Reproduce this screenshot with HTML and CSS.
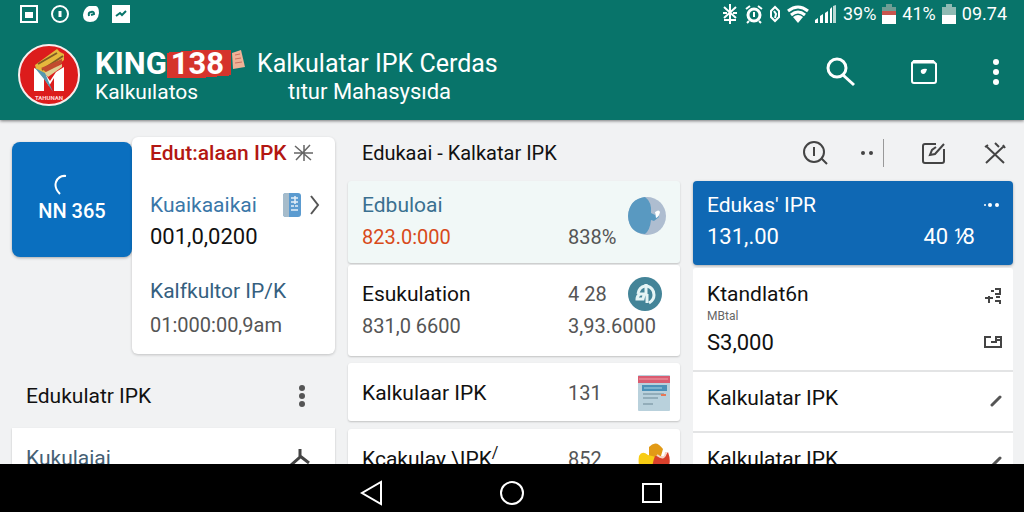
FILE: index.html
```html
<!DOCTYPE html>
<html lang="id">
<head>
    <meta charset="UTF-8">
    <meta name="viewport" content="width=device-width, initial-scale=1.0">
    <title>KING138 Kalkulator IPK</title>
    <link rel="stylesheet" href="styles.css">
</head>
<body>

<header class="header">
    <div class="status-bar">
        <div class="status-left">
            <svg width="18" height="18" viewBox="0 0 18 18"><rect x="1" y="1" width="16" height="16" fill="none" stroke="#fff" stroke-width="2"/><rect x="5" y="7" width="8" height="6" fill="#fff"/></svg>
            <svg width="20" height="20" viewBox="0 0 20 20"><circle cx="10" cy="10" r="8" fill="none" stroke="#fff" stroke-width="2"/><path d="M10 7v6" stroke="#fff" stroke-width="3"/></svg>
            <svg width="18" height="18" viewBox="0 0 18 18"><path d="M7 1h7q3 1 3 7-1 9-9 9-7 0-7-7 1-7 6-9z" fill="#fff"/><path d="M7 11q-1-4 2-4 3-1 3 2l-3 1" fill="none" stroke="#08746a" stroke-width="2"/></svg>
            <svg width="18" height="18" viewBox="0 0 18 18"><rect width="18" height="18" fill="#fff"/><path d="M4 11l4-3 2 2 4-4" fill="none" stroke="#08746a" stroke-width="2"/></svg>
        </div>
        <div class="status-right">
            <svg width="18" height="22" viewBox="0 0 18 22"><path d="M9 1v20M3 4l12 11M15 4L3 15M2 10h4M12 10h4M3 17h12" fill="none" stroke="#fff" stroke-width="2"/></svg>
            <svg width="18" height="20" viewBox="0 0 18 20"><circle cx="9" cy="11" r="6" fill="none" stroke="#fff" stroke-width="3"/><path d="M1 5l4-3M17 5l-4-3M9 8v5M4 17l-2 2M14 17l2 2" fill="none" stroke="#fff" stroke-width="2"/></svg>
            <svg width="12" height="18" viewBox="0 0 12 18"><path d="M6 2L2 6v6l4 4 4-4V6z" fill="none" stroke="#fff" stroke-width="2"/><path d="M5 6l2 3-1 4" stroke="#fff" stroke-width="2" fill="none"/></svg>
            <svg width="22" height="18" viewBox="0 0 22 18"><path d="M1 6q10-8 20 0M4 10q7-6 14 0" fill="none" stroke="#fff" stroke-width="3"/><path d="M6 12q5-4 10 0l-5 6z" fill="#fff"/></svg>
            <svg width="22" height="18" viewBox="0 0 22 18"><path d="M0 18v-3l3-2v5zM5 18v-7l3-2v9zM10 18V8l3-2v12zM15 18V4l2-2v16z" fill="#fff"/><path d="M18 18V1l3-1v18z" fill="#b9d9d4"/></svg>
            <span>39%</span>
            <svg width="14" height="20" viewBox="0 0 14 20"><path d="M4 0h6v3h4v7H0V3h4z" fill="#6f9d94"/><rect y="7" width="14" height="4" fill="#c8554d"/><rect y="11" width="14" height="9" fill="#fff"/></svg>
            <span>41%</span>
            <svg width="14" height="20" viewBox="0 0 14 20"><path d="M4 0h6v3h4v8H0V3h4z" fill="#8fbab3"/><rect y="11" width="14" height="9" fill="#fff"/></svg>
            <span>09.74</span>
        </div>
    </div>

    <div class="app-bar">
        <svg class="logo" width="62" height="62" viewBox="0 0 62 62">
            <circle cx="31" cy="31" r="30" fill="#dc1c1c" stroke="#f7eeee" stroke-width="2"/>
            <path d="M16 24l10 4 6 9 6-9 8-5v24H36V34l-5 8-5-8v13H16z" fill="#fff"/>
            <path d="M17 21l22-16 3 3 4 2v6L28 31l-10-6z" fill="#e5b83c"/>
            <path d="M20 20l19-11M24 26l21-14" stroke="#805b25" stroke-width="2"/>
            <path d="M23 24l21-9v4L29 29z" fill="#c14b2d"/>
            <path d="M26 29l18-9v3L30 33z" fill="#dfcf91"/>
            <path d="M17 24l10 5 8 19-9-13z" fill="#5798ae"/>
            <text x="31" y="56" text-anchor="middle" class="logo-text">TAHUNAN</text>
        </svg>
        <div class="brand">
            <div class="brand-name">KING<span class="brand-number">138</span><svg width="15" height="20" viewBox="0 0 15 20"><path d="M1 3l9-3 4 17-12 2z" fill="#f0b297"/><path d="M4 5l5-1M4 9l6-1M4 13l7-1" stroke="#cc705f"/></svg></div>
            <div>Kalkuılatos</div>
        </div>
        <h1 class="app-title">Kalkulatar IPK Cerdas <span>tıtur Mahasysıda</span></h1>
        <div class="app-actions">
            <button type="button" aria-label="Cari"><svg width="30" height="30" viewBox="0 0 30 30"><circle cx="11" cy="11" r="9" fill="none" stroke="#fff" stroke-width="3"/><path d="M17 18l11 10" stroke="#fff" stroke-width="3"/></svg></button>
            <button type="button" aria-label="Arsip"><svg width="28" height="26" viewBox="0 0 28 26"><path d="M4 2h19l3 3v17q0 2-2 2H4q-2 0-2-2V4z" fill="none" stroke="#fff" stroke-width="2"/><path d="M3 3h21" stroke="#fff" stroke-width="3"/><path d="M11 11q3-2 6-1-1 5-4 5-3-1-2-4z" fill="#fff"/></svg></button>
            <button type="button" aria-label="Menu"><svg width="8" height="28" viewBox="0 0 8 28" fill="#fff"><circle cx="4" cy="4" r="3"/><circle cx="4" cy="14" r="3"/><circle cx="4" cy="24" r="3"/></svg></button>
        </div>
    </div>
</header>

<main class="content">
    <section class="side">
        <div class="profile">
            <a href="#" class="tile">
                <svg width="14" height="21" viewBox="0 0 14 21"><path d="M13 2Q6 1 3 8q-2 6 4 12" fill="none" stroke="#fff" stroke-width="2"/></svg>
                <span>NN 365</span>
            </a>
            <div class="profile-card">
                <h2 class="profile-title">Edut:alaan IPK <svg width="19" height="18" viewBox="0 0 19 18"><path d="M1 2l16 14M16 1L2 16M10 1v16M0 9h19" stroke="#666" stroke-width="1.5"/></svg></h2>
                <a href="#" class="profile-link">
                    <span>Kuaikaaikai</span>
                    <svg class="book" width="18" height="24" viewBox="0 0 18 24"><rect width="18" height="24" rx="3" fill="#5b9bd0"/><path d="M3 0h3v24H3q-3 0-3-3V3q0-3 3-3z" fill="#a6bccb"/><path d="M8 5h7M8 9h7M8 13h3m1 0h3M8 17h7M12 3v8" stroke="#e5f0f8" stroke-width="1.5"/></svg>
                    <svg width="12" height="20" viewBox="0 0 12 20"><path d="M2 1l7 9-7 9" fill="none" stroke="#555" stroke-width="2"/></svg>
                </a>
                <div class="profile-value">001,0,0200</div>
                <div class="profile-label">Kalfkultor IP/K</div>
                <div class="profile-time">01:000:00,9am</div>
            </div>
        </div>
        <div class="side-header">
            <h2>Edukulatr IPK</h2>
            <button type="button" aria-label="Opsi"><svg width="8" height="22" viewBox="0 0 8 22" fill="#555"><circle cx="4" cy="3" r="3"/><circle cx="4" cy="11" r="3"/><circle cx="4" cy="19" r="3"/></svg></button>
        </div>
        <div class="side-card">
            <span>Kukulaiai</span>
            <svg width="22" height="24" viewBox="0 0 22 24"><path d="M11 1v8L1 18M11 8l9 7" fill="none" stroke="#444" stroke-width="3"/></svg>
        </div>
    </section>

    <section class="main-area">
        <div class="toolbar">
            <h2>Edukaai - Kalkatar IPK</h2>
            <button type="button" aria-label="Info"><svg width="26" height="24" viewBox="0 0 26 24"><circle cx="12" cy="11" r="10" fill="none" stroke="#444" stroke-width="2"/><path d="M12 6v9M19 17l6 6" stroke="#444" stroke-width="2"/></svg></button>
            <button type="button" class="more" aria-label="Lainnya"><svg width="12" height="6" viewBox="0 0 12 6" fill="#444"><circle cx="2" cy="3" r="2"/><circle cx="10" cy="3" r="2"/></svg></button>
            <button type="button" class="edit" aria-label="Ubah"><svg width="24" height="22" viewBox="0 0 24 22"><path d="M14 2H3Q1 2 1 4v15q0 2 2 2h17q2 0 2-2V7" fill="none" stroke="#444" stroke-width="2"/><path d="M22 2l-9 10-5 1 2-5 4-3" fill="none" stroke="#444" stroke-width="2"/></svg></button>
            <button type="button" aria-label="Tutup"><svg width="22" height="22" viewBox="0 0 22 22"><path d="M2 4l18 17M20 4L2 21M11 1l4 4M19 3l2 3M1 5l3-2" fill="none" stroke="#444" stroke-width="2"/></svg></button>
        </div>
        <div class="columns">
            <div class="list">
                <div class="row row-active">
                    <span class="blue">Edbuloai</span>
                    <svg class="tall" width="39" height="38" viewBox="0 0 39 38"><circle cx="19" cy="19" r="19" fill="#aebdd0"/><path d="M17 0q7 5 6 16l4 2 1-4 3 6-5 4-3-1q-1 10-6 14Q1 36 0 19 1 2 17 0z" fill="#5999c1"/><path d="M27 15q4-3 5 0-1 5-4 6z" fill="#fff"/></svg>
                    <span class="orange">823.0:000</span>
                    <span class="grey percent">838%</span>
                </div>
                <div class="row row-double">
                    <span>Esukulation</span>
                    <span class="grey">4 28</span>
                    <svg width="34" height="34" viewBox="0 0 34 34"><circle cx="17" cy="17" r="17" fill="#438498"/><path d="M10 17q1-7 7-8h2q7 2 7 9 0 5-5 8" fill="none" stroke="#e5f4f5" stroke-width="3"/><path d="M18 7v10h-6q-3 2-3 5h6l1-4M19 17v9" fill="none" stroke="#e5f4f5" stroke-width="3"/></svg>
                    <span class="grey">831,0 6600</span>
                    <span class="grey wide">3,93.6000</span>
                </div>
                <div class="row">
                    <span>Kalkulaar IPK</span>
                    <span class="grey">131</span>
                    <svg class="end" width="32" height="36" viewBox="0 0 32 36"><rect width="32" height="36" rx="1" fill="#b9d1dc"/><path d="M0 1h32v7H0z" fill="#d95c70"/><path d="M1 4h29" stroke="#f0a0aa"/><path d="M4 10h25v6H4z" fill="#4b91b8"/><path d="M6 13h18" stroke="#a9d3e4"/><path d="M5 19h21M5 23h15M5 29h10" stroke="#6d8997"/><path d="M23 20h5" stroke="#e77755" stroke-width="2"/></svg>
                </div>
                <div class="row">
                    <span>Kcakulay \IPK<sup>/</sup></span>
                    <span class="grey">852</span>
                    <svg class="end" width="32" height="34" viewBox="0 0 32 34"><path d="M11 5q7-8 14 2l-4 14-10 3z" fill="#e29a16"/><path d="M1 14q3-6 9-1l8 2-3 17H7Q-1 27 1 14z" fill="#f8cc13"/><path d="M17 14l9 1 4-5q4 11-1 17-7 7-14 5-2-8 2-18z" fill="#d9402b"/><path d="M19 13q8 6 9-3" fill="none" stroke="#f4d3c4" stroke-width="2"/></svg>
                </div>
            </div>

            <div class="list">
                <div class="summary">
                    <span>Edukas' IPR</span>
                    <svg width="15" height="6" viewBox="0 0 15 6" fill="#fff"><circle cx="1" cy="3" r="1"/><circle cx="6" cy="3" r="2"/><circle cx="13" cy="3" r="2"/></svg>
                    <span>131,.00</span>
                    <span class="summary-rate">40 ⅟8</span>
                </div>
                <div class="detail">
                    <div>
                        <div>Ktandlat6n</div>
                        <div class="detail-sub">MBtal</div>
                        <div class="detail-value">S3,000</div>
                    </div>
                    <div class="detail-icons">
                        <svg width="18" height="18" viewBox="0 0 18 18"><path d="M1 11h8M5 9v7M7 4h3M11 2h5v5h-5M12 10h4M11 14h5v3" fill="none" stroke="#444" stroke-width="2"/></svg>
                        <svg width="18" height="12" viewBox="0 0 18 12"><path d="M7 1H1v10h16V1h-5v5H7M12 4h4" fill="none" stroke="#444" stroke-width="2"/></svg>
                    </div>
                </div>
                <div class="item">
                    <span>Kalkulatar IPK</span>
                    <svg width="12" height="12" viewBox="0 0 12 12"><path d="M2 10l8-8" stroke="#555" stroke-width="3" stroke-linecap="round"/></svg>
                </div>
                <div class="item">
                    <span>Kalkulatar IPK</span>
                    <svg width="12" height="12" viewBox="0 0 12 12"><path d="M2 10l8-8" stroke="#555" stroke-width="3" stroke-linecap="round"/></svg>
                </div>
            </div>
        </div>
    </section>
</main>

<nav class="nav-bar">
    <button type="button" aria-label="Kembali"><svg width="24" height="26" viewBox="0 0 24 26"><path d="M21 2v22L2 13z" fill="none" stroke="#fff" stroke-width="2"/></svg></button>
    <button type="button" aria-label="Beranda"><svg width="26" height="26" viewBox="0 0 26 26"><circle cx="13" cy="13" r="11" fill="none" stroke="#fff" stroke-width="2"/></svg></button>
    <button type="button" aria-label="Terbaru"><svg width="24" height="24" viewBox="0 0 24 24"><rect x="3" y="3" width="18" height="18" fill="none" stroke="#fff" stroke-width="2"/></svg></button>
</nav>

</body>
</html>
```
FILE: styles.css
```css
* {
    box-sizing: border-box;
}
body {
    margin: 0;
    height: 100vh;
    display: flex;
    flex-direction: column;
    background-color: #f1f2f3;
    font-family: Roboto, "Liberation Sans", sans-serif;
    font-size: 21px;
    line-height: 32px;
    color: #111;
    white-space: nowrap;
}
h1, h2 {
    margin: 0;
    font-size: 21px;
    font-weight: normal;
}
a {
    color: inherit;
    text-decoration: none;
}
svg {
    display: block;
    flex-shrink: 0;
}
button {
    padding: 0;
    border: none;
    background: none;
    cursor: pointer;
}

/* header */
.header {
    flex-shrink: 0;
    position: relative;
    background-color: #08746a;
    color: #fff;
    box-shadow: 0 1px 3px rgba(0, 0, 0, 0.5);
}
.status-bar {
    display: flex;
    justify-content: space-between;
    height: 30px;
    padding: 0 17px 2px 20px;
    font-size: 18px;
}
.status-left, .status-right {
    display: flex;
    align-items: center;
}
.status-left {
    gap: 12px;
}
.status-right {
    gap: 6px;
}
.app-bar {
    display: flex;
    align-items: center;
    height: 90px;
    padding: 0 24px 0 18px;
}
.logo {
    margin-right: 15px;
}
.logo-text {
    font-size: 6px;
    font-weight: bold;
    fill: #ffd9d9;
}
.brand {
    padding-top: 6px;
    width: 162px;
    line-height: 28px;
}
.brand-name {
    display: flex;
    font-size: 31px;
    font-weight: bold;
}
.brand-number {
    padding: 0 7px 0 4px;
    background: linear-gradient(175deg, transparent 8%, #d5342c 8%, #d5342c 92%, transparent 92%);
}
.app-title {
    padding-top: 6px;
    font-size: 25px;
    line-height: 28px;
}
.app-title span {
    display: block;
    padding-left: 31px;
    font-size: 22px;
}
.app-actions {
    display: flex;
    align-items: center;
    gap: 54px;
    margin-left: auto;
    padding-bottom: 6px;
}

/* content */
.content {
    flex: 1;
    min-height: 0;
    display: grid;
    grid-template-columns: 323fr 665fr;
    gap: 13px;
    padding: 1px 11px 0 12px;
    overflow: hidden;
}
.profile {
    display: flex;
    align-items: flex-start;
    padding-top: 16px;
}
.tile {
    display: flex;
    flex-direction: column;
    align-items: center;
    width: 120px;
    height: 115px;
    margin-top: 5px;
    padding-top: 32px;
    background-color: #0a6fbf;
    border-radius: 8px;
    box-shadow: 0 1px 3px rgba(0, 0, 0, 0.3);
    color: #fff;
    font-size: 20px;
    font-weight: 500;
}
.tile svg {
    margin-right: 24px;
}
.profile-card {
    flex: 1;
    padding: 0 14px 13px 18px;
    background-color: #fff;
    border-radius: 6px;
    box-shadow: 0 1px 3px rgba(0, 0, 0, 0.2);
}
.profile-title {
    display: flex;
    align-items: center;
    justify-content: space-between;
    padding-right: 8px;
    color: #b31712;
    font-weight: 500;
}
.profile-link {
    display: flex;
    align-items: center;
    margin-top: 20px;
    color: #3a77a8;
}
.book {
    margin: 0 8px 0 auto;
}
.profile-value {
    font-size: 22px;
}
.profile-label {
    margin-top: 22px;
    color: #35607f;
}
.profile-time {
    padding-top: 2px;
    font-size: 20px;
    color: #555;
}
.side-header {
    display: flex;
    align-items: center;
    justify-content: space-between;
    height: 74px;
    padding: 10px 29px 0 14px;
}
.side-card {
    display: flex;
    justify-content: space-between;
    padding: 14px 24px 14px 14px;
    background-color: #fff;
    box-shadow: 0 1px 2px rgba(0, 0, 0, 0.2);
    color: #456074;
}
.side-card svg {
    margin-top: 6px;
}

/* toolbar over both lists */
.toolbar {
    display: flex;
    align-items: center;
    height: 60px;
    padding: 4px 7px 0 14px;
}
.toolbar h2 {
    margin-right: auto;
    font-size: 20px;
}
.more {
    height: 28px;
    margin-left: 33px;
    padding-right: 10px;
    border-right: 1px solid #999;
}
.edit {
    margin: 0 38px;
}
.columns {
    display: grid;
    grid-template-columns: 332fr 320fr;
    align-items: start;
    gap: 13px;
}
.row {
    display: grid;
    grid-template-columns: 1fr 60px 42px;
    align-items: center;
    min-height: 58px;
    margin-bottom: 8px;
    padding: 2px 10px 0 14px;
    background-color: #fff;
    border-radius: 3px;
    box-shadow: 0 1px 2px rgba(0, 0, 0, 0.2);
}
.row-active {
    margin-bottom: 2px;
    padding-top: 8px;
    padding-bottom: 10px;
    background-color: #f1f8f7;
}
.row-double {
    margin-bottom: 7px;
    padding-top: 13px;
    padding-bottom: 14px;
}
.row-double svg {
    height: 34px;
    margin: -1px 0;
}
.tall {
    grid-column: 3;
    grid-row: 1 / 3;
    align-self: start;
    margin-top: 8px;
}
.wide {
    grid-column: 2 / 4;
}
.end {
    justify-self: end;
}
.row sup {
    font-size: 16px;
    line-height: 0;
}
.blue {
    color: #3a7090;
}
.orange {
    grid-column: 1;
    grid-row: 2;
    font-size: 20px;
    color: #d84a1b;
}
.grey {
    font-size: 20px;
    color: #555;
}
.percent {
    grid-column: 2;
    grid-row: 2;
}
.summary {
    display: grid;
    grid-template-columns: 1fr auto;
    align-items: center;
    justify-items: start;
    padding: 8px 14px 12px;
    background-color: #0f68b4;
    border-radius: 4px;
    box-shadow: 0 1px 3px rgba(0, 0, 0, 0.3);
    color: #fff;
}
.summary svg {
    justify-self: end;
}
.summary > :nth-child(n+3) {
    font-size: 22px;
}
.summary-rate {
    padding-right: 24px;
}
.detail {
    display: flex;
    justify-content: space-between;
    margin-top: 3px;
    padding: 10px 11px 11px 14px;
    background-color: #fff;
    border-radius: 3px 3px 0 0;
}
.detail-sub {
    margin-bottom: 5px;
    font-size: 12px;
    line-height: 12px;
    color: #666;
}
.detail-value {
    font-size: 22px;
}
.detail-icons {
    display: flex;
    flex-direction: column;
    justify-content: space-between;
    padding: 9px 0 11px;
}
.item {
    display: flex;
    align-items: center;
    justify-content: space-between;
    padding: 10px 11px 17px 14px;
    background-color: #fff;
    border-top: 2px solid #e3e4e5;
}
.item svg {
    margin-top: 6px;
}

/* android navigation */
.nav-bar {
    display: flex;
    align-items: center;
    justify-content: center;
    gap: 115px;
    height: 48px;
    flex-shrink: 0;
    padding-top: 10px;
    background-color: #000;
}
```
